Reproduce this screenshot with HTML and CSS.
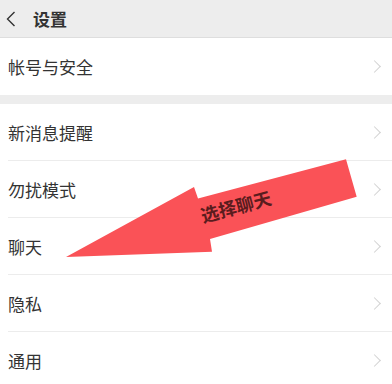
FILE: index.html
```html
<!DOCTYPE html>
<html lang="zh">
<head>
<meta charset="utf-8">
<link rel="stylesheet" href="styles.css">
</head>
<body>
<div class="page">
  <header class="topbar">
    <svg class="back" width="10" height="16" viewBox="0 0 10 16"><path d="M8.5 1 L1.5 8 L8.5 15" fill="none" stroke="#333" stroke-width="1.4"/></svg>
    <span class="title">设置</span>
  </header>
  <div class="group">
    <div class="row"><span class="label">帐号与安全</span><span class="chev"></span></div>
  </div>
  <div class="group gap">
    <div class="row"><span class="label">新消息提醒</span><span class="chev"></span></div>
    <div class="row"><span class="label">勿扰模式</span><span class="chev"></span></div>
    <div class="row"><span class="label">聊天</span><span class="chev"></span></div>
    <div class="row"><span class="label">隐私</span><span class="chev"></span></div>
    <div class="row"><span class="label">通用</span><span class="chev"></span></div>
  </div>
  <svg class="arrow" width="392" height="384" viewBox="0 0 392 384">
    <polygon points="66,257 194,187 198,198.5 346,159.3 356.7,196.7 210,239 212,251.7" fill="#fa5257"/>
  </svg>
  <span class="note">选择聊天</span>
</div>
</body>
</html>
```
FILE: styles.css
```css
html, body {
  margin: 0;
  padding: 0;
  background: #ededed;
}
.page {
  position: relative;
  width: 392px;
  height: 384px;
  overflow: hidden;
  font-family: "Noto Sans CJK SC", "Noto Sans", sans-serif;
  color: #333;
}
.topbar {
  height: 37px;
  display: flex;
  align-items: center;
  background: #ededed;
  border-bottom: 1px solid #dedede;
  box-sizing: content-box;
}
.back {
  margin-left: 6px;
  margin-right: 17px;
}
.title {
  font-size: 17px;
  font-weight: 700;
  color: #333;
  line-height: 1;
}
.group {
  background: #fff;
}
.gap {
  margin-top: 9px;
}
.row {
  height: 57px;
  display: flex;
  align-items: center;
  justify-content: space-between;
  padding-left: 8px;
  padding-right: 10px;
  position: relative;
}
.row + .row::before {
  content: "";
  position: absolute;
  left: 8px;
  right: 0;
  top: -1px;
  height: 1px;
  background: #ececec;
}
.label {
  font-size: 17px;
  line-height: 1;
  color: #333;
}
.chev {
  width: 8px;
  height: 8px;
  border-top: 1.2px solid #d2d2d2;
  border-right: 1.2px solid #d2d2d2;
  transform: rotate(45deg);
  margin-right: 3px;
}
.arrow {
  position: absolute;
  left: 0;
  top: 0;
}
.note {
  position: absolute;
  left: 201px;
  top: 206px;
  font-size: 18px;
  font-weight: 700;
  color: #5a1c1e;
  line-height: 1;
  transform: rotate(-15deg);
  transform-origin: left center;
  white-space: nowrap;
}
```
